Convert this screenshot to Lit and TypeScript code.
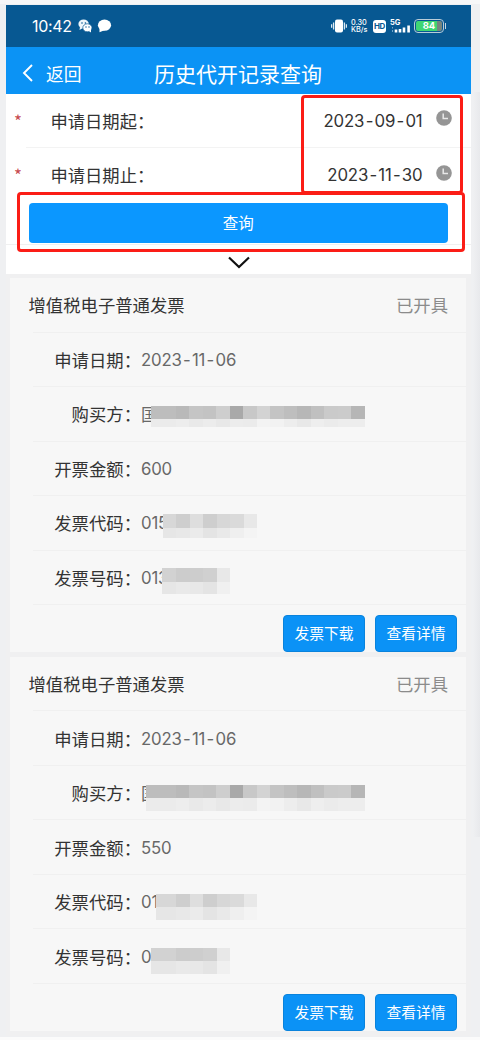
import { LitElement, html, svg, css } from "lit";
import { customElement, property } from "lit/decorators.js";

interface Mask {
  left: number;
  top: number;
  height: number;
  dark: string[];
  light: string[];
  first: number;
  lightHeight: number;
}
interface Field {
  label: string;
  value: string;
  mask?: Mask;
}

const CELL = 13.5;

const buyerDark = ["#bdbdbd", "#b9b9b9", "#c5c5c5", "#c3c3c3", "#cecece", "#a9a9a9", "#c8c8c8", "#d3d3d3", "#c4c4c4", "#bebebe", "#b7b7b7", "#c0c0c0", "#cacaca", "#cbcbcb", "#b6b6b6"];
const buyerLight = ["#ebebeb", "#ededed", "#e9e9e9", "#ececec", "#e8e8e8", "#ececec", "#ebebeb", "#f3f3f3", "#f2f2f2", "#ededed", "#e8e8e8", "#eeeeee", "#ebebeb", "#ededed", "#ededed"];
const codeDark = ["#d7d7d7", "#cecece", "#dedede", "#cecece", "#d7d7d7", "#dadada", "#e8e8e8"];
const codeLight = ["#e6e6e6", "#e8e8e8", "#ebebeb", "#e4e4e4", "#e9e9e9", "#efefef", "#f4f4f4"];
const numDark = ["#d2d2d2", "#cccccc", "#cdcdcd", "#d0d0d0", "#e8e8e8"];
const numLight = ["#e6e6e6", "#e9e9e9", "#e8e8e8", "#e4e4e4", "#f0f0f0"];

const records: Field[][] = [
  [
    { label: "申请日期：", value: "2023-11-06" },
    { label: "购买方：", value: "国", mask: { left: 10, first: 24.5, top: 18.5, height: 13.5, lightHeight: 8, dark: buyerDark, light: buyerLight } },
    { label: "开票金额：", value: "600" },
    { label: "发票代码：", value: "015", mask: { left: 21.5, first: 13.5, top: 18, height: 13.5, lightHeight: 10, dark: codeDark, light: codeLight } },
    { label: "发票号码：", value: "013", mask: { left: 20.5, first: 14.5, top: 17, height: 13.5, lightHeight: 12, dark: numDark, light: numLight } },
  ],
  [
    { label: "申请日期：", value: "2023-11-06" },
    { label: "购买方：", value: "国", mask: { left: 5, first: 29.5, top: 19, height: 13, lightHeight: 13, dark: buyerDark, light: buyerLight } },
    { label: "开票金额：", value: "550" },
    { label: "发票代码：", value: "01", mask: { left: 14.5, first: 20.5, top: 19, height: 12.5, lightHeight: 13, dark: codeDark, light: codeLight } },
    { label: "发票号码：", value: "0", mask: { left: 10, first: 25, top: 19, height: 12.5, lightHeight: 13, dark: numDark, light: numLight } },
  ],
];

/** Splits a value on its hyphens so that each hyphen can be given wider sides. */
const spaced = (value: string) =>
  value.split("-").map((part, i) => (i ? html`<span class="dash">-</span>${part}` : part));

@customElement("status-bar")
class StatusBar extends LitElement {
  static styles = css`
    :host { display: flex; height: 42px; background: #075892; color: #fff; align-items: center; justify-content: space-between; padding: 0 25px 0 26px; }
    .side { display: flex; align-items: center; height: 100%; }
    .time { font: 400 16px/20px Inter, sans-serif; letter-spacing: -0.35px; width: 40px; margin-right: 6px; white-space: nowrap; }
    svg { display: block; }
    .rate { font: 500 7.3px/7.5px Inter, sans-serif; margin: 0 5px 0 4px; width: 17px; white-space: nowrap; }
    .hd { background: #fff; color: #075892; font: 700 8px/13px Inter, sans-serif; width: 13px; height: 13px; border-radius: 3px; text-align: center; margin-right: 4px; letter-spacing: -0.5px; }
    .bat { box-sizing: border-box; display: flex; align-items: center; justify-content: center; width: 30px; height: 14px; border: 1px solid #b8ccd8; border-radius: 4px; background: linear-gradient(90deg, #3fd673 0 82%, #77857f 82%) content-box; padding: 1px; font: 700 9.5px/10px Inter, sans-serif; margin-left: 3px; }
    .nub { width: 1px; height: 6px; background: #c5d5df; margin-left: 1px; }
  `;
  render() {
    return html`
      <div class="side">
        <span class="time">10:42</span>
        <svg width="35" height="16" viewBox="0 0 35 16">
          <ellipse cx="5.6" cy="6" rx="5.2" ry="4.6" fill="#eef6fb" />
          <path d="M2 9L1.5 12L5 10Z" fill="#eef6fb" />
          <ellipse cx="9.4" cy="9.8" rx="4.6" ry="4" fill="#fff" stroke="#075892" stroke-width=".7" />
          <path d="M11 13l2 1.5v-3z" fill="#fff" />
          <g fill="#075892"><circle cx="4" cy="5" r=".8" /><circle cx="7.4" cy="5" r=".8" /><circle cx="8" cy="9" r=".7" /><circle cx="11" cy="9" r=".7" /></g>
          <ellipse cx="26.5" cy="7.2" rx="6.6" ry="5.6" fill="#fff" />
          <path d="M21.5 10L21.5 14.2L27 12Z" fill="#fff" />
        </svg>
      </div>
      <div class="side">
        <svg width="16" height="14" viewBox="0 0 16 14">
          <rect x="4" y="0.5" width="8" height="13" rx="2" fill="#fff" />
          <path d="M2.6 3.5v7M13.4 3.5v7M.6 5.3v3.4M15.4 5.3v3.4" stroke="#dce9f1" stroke-width="1.3" />
        </svg>
        <div class="rate">0.30<br />KB/s</div>
        <div class="hd">HD</div>
        <svg width="21" height="14" viewBox="0 0 21 14">
          <text x="0" y="6.2" font-family="Inter, sans-serif" font-size="7.5" font-weight="700" fill="#fff">5G</text>
          <path d="M2.5 8v1.5M2.5 11v2" stroke="#6fa5ca" />
          <path d="M6 13.5v-3M10 13.5v-3.5M14 13.5v-5M18.6 13.5v-7" stroke="#fff" stroke-width="2.6" />
        </svg>
        <div class="bat">84</div><i class="nub"></i>
      </div>`;
  }
}

@customElement("invoice-card")
class InvoiceCard extends LitElement {
  @property({ attribute: false }) fields: Field[] = [];
  static styles = css`
    :host { display: block; box-sizing: border-box; height: 374.2px; background: #f7f7f7; font-size: 17.35px; color: #333; }
    .head, .row { box-sizing: border-box; height: 54.5px; display: flex; align-items: center; position: relative; }
    .head { padding: 0 18px 2px 18.5px; justify-content: space-between; }
    .state { color: #8b8b8b; }
    .head::after, .row::after { content: ""; position: absolute; left: 23px; right: 0; bottom: 0; height: 1px; background: #f0f0f0; }
    .label { width: 131px; text-align: right; white-space: nowrap; padding-bottom: 1px; }
    .value { position: relative; height: 100%; display: flex; align-items: center; color: #686868; font-family: Inter, "Noto Sans CJK SC", sans-serif; font-weight: 400; font-size: 16.8px; letter-spacing: -0.2px; }
    .dash { padding: 0 1.4px; }
    .mask { position: absolute; left: 0; top: 0; }
    .actions { display: flex; justify-content: flex-end; gap: 10px; padding: 10px 9px 0 0; }
    .btn { box-sizing: border-box; width: 82px; height: 37px; border: 1px solid #0a83dc; border-radius: 4px; background: #0b92f6; color: #fff; font-size: 14.8px; line-height: 34px; text-align: center; white-space: nowrap; }
  `;
  private cells(m: Mask) {
    const edge = (i: number) => (i === 0 ? m.left : m.left + m.first + (i - 1) * CELL);
    const strip = (colors: string[], y: number, h: number) =>
      colors.map((c, i) => svg`<rect x=${edge(i)} y=${y} width=${edge(i + 1) - edge(i) + 0.2} height=${h} fill=${c} />`);
    return html`<svg class="mask" width="250" height="54" shape-rendering="crispEdges">
      ${strip(m.dark, m.top, m.height)}${strip(m.light, m.top + m.height, m.lightHeight)}
    </svg>`;
  }
  render() {
    return html`
      <div class="head"><span>增值税电子普通发票</span><span class="state">已开具</span></div>
      ${this.fields.map((f) => html`<div class="row">
        <span class="label">${f.label}</span>
        <span class="value">${spaced(f.value)}${f.mask ? this.cells(f.mask) : ""}</span>
      </div>`)}
      <div class="actions"><div class="btn">发票下载</div><div class="btn">查看详情</div></div>`;
  }
}

@customElement("app-root")
class AppRoot extends LitElement {
  static styles = css`
    :host { display: block; box-sizing: border-box; position: relative; width: 480px; height: 1040px; overflow: hidden; padding: 5px 9px 0 6px; background: linear-gradient(#f7f7f8 0 4px, #eff0f2 4px 1037px, #fbfbfb 1037px); font-family: "Noto Sans CJK SC", sans-serif; font-weight: 400; }
    .shade { position: absolute; left: 473px; top: 92px; width: 7px; height: 745px; background: linear-gradient(90deg, #eff0f2, #e8e9ec); }
    .phone { height: 1031px; background: #f0f0f1; }
    .nav { height: 46.5px; display: grid; grid-template-columns: 148px 1fr; align-items: center; background: #0b93f5; color: #fff; }
    .back { display: flex; align-items: center; font-size: 17.8px; padding: 6px 0 0 16px; gap: 12px; line-height: 24px; }
    .title { font-size: 21px; line-height: 28px; padding-top: 6px; }
    .form { position: relative; height: 180.5px; background: #fff; font-size: 17.3px; color: #333; }
    .row { height: 54.5px; display: flex; align-items: center; padding: 0 19px 0 8px; position: relative; }
    .row::after { content: ""; position: absolute; left: 20px; right: 0; bottom: 0; height: 1px; background: #f3f3f3; }
    .row + .row::after { display: none; }
    .star { color: #c74b50; width: 36.5px; font-size: 17px; line-height: 20px; }
    .name { flex: 1; white-space: nowrap; padding-bottom: 1px; }
    .date { font: 400 16.8px/20px Inter, sans-serif; letter-spacing: -0.15px; margin-right: 13.5px; color: #333; }
    .dash { padding: 0 1.3px; }
    .clock { display: block; margin-top: -5px; }
    .query { height: 40px; margin: 0 23.5px 0 23px; border-radius: 4px; background: #0b97ff; color: #fff; font-size: 15.5px; line-height: 39px; text-align: center; }
    .fold { border-top: 1px solid #f0f0f0; margin-top: 1px; padding-top: 11px; }
    .fold svg { display: block; margin: 0 auto; }
    .mark { position: absolute; box-sizing: border-box; border: 3px solid #fb1d16; border-radius: 4px; }
    .dates { left: 295px; top: 1px; width: 162px; height: 99px; }
    .submit { left: 11px; top: 98px; width: 448px; height: 60px; }
    .list { display: flex; flex-direction: column; gap: 4.6px; padding: 4px 5px 0 4px; }
  `;
  private row(name: string, date: string) {
    return html`<div class="row">
      <span class="star">*</span><span class="name">${name}</span><span class="date">${spaced(date)}</span>
      <svg class="clock" width="16" height="16" viewBox="0 0 16 16"><circle cx="8" cy="8" r="7.8" fill="#959595" /><path d="M7.2 3.6V8.6H12" fill="none" stroke="#e8e8e8" stroke-width="1.5" /></svg>
    </div>`;
  }
  render() {
    return html`
      <div class="shade"></div>
      <div class="phone">
        <status-bar></status-bar>
        <div class="nav">
          <div class="back"><svg width="12" height="18" viewBox="0 0 12 18"><path d="M10 1L2 9L10 17" fill="none" stroke="#fff" stroke-width="1.9" /></svg>返回</div>
          <div class="title">历史代开记录查询</div>
        </div>
        <div class="form">
          ${this.row("申请日期起：", "2023-09-01")}
          ${this.row("申请日期止：", "2023-11-30")}
          <div class="query">查询</div>
          <div class="fold"><svg width="22" height="13" viewBox="0 0 22 13"><path d="M1 1.5L11 11L21 1.5" fill="none" stroke="#111" stroke-width="2.2" /></svg></div>
          <div class="mark dates"></div>
          <div class="mark submit"></div>
        </div>
        <div class="list">${records.map((r) => html`<invoice-card .fields=${r}></invoice-card>`)}</div>
      </div>`;
  }
}
